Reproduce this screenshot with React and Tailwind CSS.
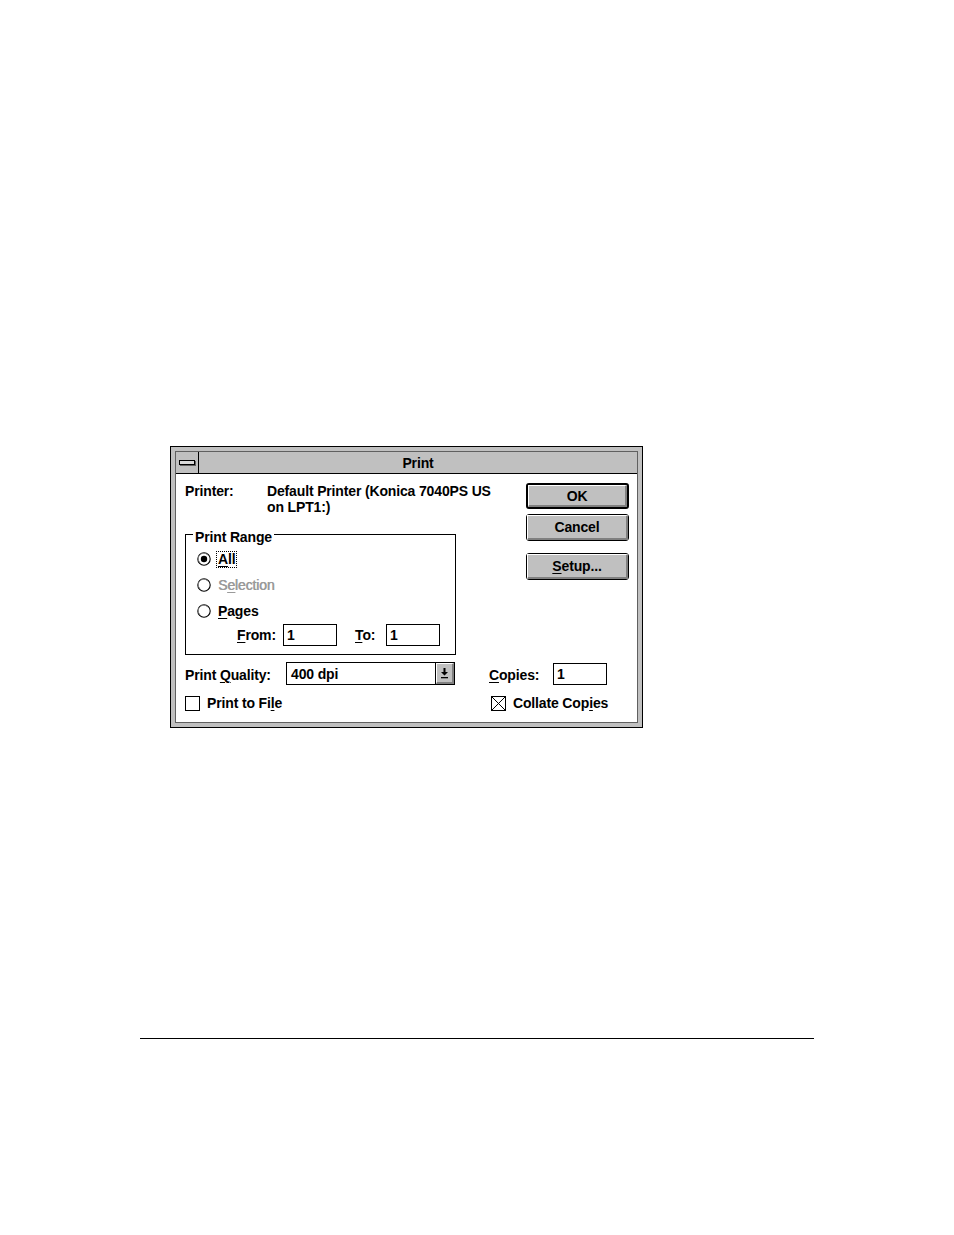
const font = "font-['Liberation_Sans',Arial,sans-serif]";

function U({ children }) {
  return <span className="underline decoration-1 underline-offset-[2px]">{children}</span>;
}

function Radio({ checked }) {
  return (
    <svg width="14" height="14" viewBox="0 0 14 14" className="shrink-0">
      <circle cx="7" cy="7" r="6.2" fill="white" stroke="#000" strokeWidth="1.1" />
      <path d="M2.8 10.6 A5.4 5.4 0 0 1 10.6 2.8" fill="none" stroke="#808080" strokeWidth="1" />
      {checked && <circle cx="7" cy="7" r="3.2" fill="#000" />}
    </svg>
  );
}

function Check({ checked }) {
  return (
    <svg width="15" height="15" viewBox="0 0 15 15" className="shrink-0">
      <rect x="0.5" y="0.5" width="14" height="14" fill="white" stroke="#000" />
      {checked && <path d="M1 1 L14 14 M14 1 L1 14" stroke="#000" strokeWidth="1" />}
    </svg>
  );
}

function Btn({ children, def }) {
  return (
    <div
      className={`w-[103px] ${def ? "h-[26px] border-2" : "h-[27px] border"} border-black rounded-[3px] bg-[#c0c0c0]`}
    >
      <div className="h-full flex items-center justify-center border-t-[1px] border-l-[1px] border-r-2 border-b-2 border-t-white border-l-white border-r-[#808080] border-b-[#808080]">
        {children}
      </div>
    </div>
  );
}

function Field({ w, value }) {
  return (
    <div className={`${w} h-[22px] border border-black bg-white pl-[3px] flex items-center`}>
      {value}
    </div>
  );
}

export default function App() {
  return (
    <div className={`w-[954px] h-[1235px] bg-white pt-[446px] text-black ${font} font-bold text-[14px] leading-[16px] tracking-[-0.15px]`}>
      {/* dialog */}
      <div className="ml-[170px] w-[473px] border border-black bg-[#c0c0c0] p-[4px]">
        <div className="border border-[#606060]">
          {/* title bar */}
          <div className="flex h-[22px] border-b border-black bg-[#c0c0c0]">
            <div className="w-[23px] border-r border-black flex items-center justify-center">
              <div className="w-[16px] h-[5px] border border-black bg-[#d8d8d8] shadow-[1px_1px_0_#606060]" />
            </div>
            <div className="flex-1 flex items-center justify-center">Print</div>
          </div>

          {/* body */}
          <div className="bg-white h-[248px] pl-[9px] pt-[9px]">
            <div className="flex">
              <div className="w-[341px]">
                <div className="flex whitespace-nowrap">
                  <div className="w-[82px]">Printer:</div>
                  <div>
                    Default Printer (Konica 7040PS US
                    <br />
                    on LPT1:)
                  </div>
                </div>

                {/* print range group */}
                <div className="relative mt-[19px] w-[271px] border border-black pt-[11px] pb-[8px]">
                  <span className="absolute -top-[6px] left-[7px] bg-white px-[2px]">Print Range</span>
                  <div className="h-[26px] flex items-center pl-[11px] gap-[5px]">
                    <Radio checked />
                    <span className="border border-dotted border-black px-[1px] leading-[15px]">
                      <U>A</U>ll
                    </span>
                  </div>
                  <div className="h-[26px] flex items-center pl-[11px] gap-[5px] text-[#9a9a9a]">
                    <Radio />
                    <span className="border border-transparent px-[1px] font-normal [text-shadow:0.5px_0_0_#9a9a9a]">
                      S<U>e</U>lection
                    </span>
                  </div>
                  <div className="h-[26px] flex items-center pl-[11px] gap-[5px]">
                    <Radio />
                    <span className="border border-transparent px-[1px]">
                      <U>P</U>ages
                    </span>
                  </div>
                  <div className="flex items-center pl-[51px]">
                    <div className="w-[46px]">
                      <U>F</U>rom:
                    </div>
                    <Field w="w-[54px]" value="1" />
                    <div className="w-[31px] ml-[18px]">
                      <U>T</U>o:
                    </div>
                    <Field w="w-[54px]" value="1" />
                  </div>
                </div>
              </div>

              <div className="flex flex-col">
                <Btn def>OK</Btn>
                <div className="mt-[5px]">
                  <Btn>Cancel</Btn>
                </div>
                <div className="mt-[12px]">
                  <Btn>
                    <span>
                      <U>S</U>etup...
                    </span>
                  </Btn>
                </div>
              </div>
            </div>

            {/* quality / copies */}
            <div className="flex items-center mt-[7px]">
              <div className="w-[101px] mt-[2px]">
                Print <U>Q</U>uality:
              </div>
              <div className="w-[169px] h-[23px] border border-black flex">
                <div className="flex-1 pl-[4px] flex items-center">400 dpi</div>
                <div className="w-[19px] border-l border-black bg-[#c0c0c0] flex items-center justify-center">
                  <div className="w-full h-full flex items-center justify-center border-t border-l border-r-2 border-b-2 border-t-white border-l-white border-r-[#808080] border-b-[#808080]">
                    <svg width="9" height="11" viewBox="0 0 9 11">
                      <path d="M3.5 0 H5.5 V4 H8 L4.5 7.5 L1 4 H3.5 Z" fill="#000" />
                      <rect x="1" y="9" width="7" height="1.3" fill="#000" />
                    </svg>
                  </div>
                </div>
              </div>
              <div className="w-[64px] ml-[34px] mt-[2px]">
                <U>C</U>opies:
              </div>
              <Field w="w-[54px]" value="1" />
            </div>

            <div className="flex items-center mt-[10px]">
              <div className="w-[306px] flex items-center gap-[7px]">
                <Check />
                <span>
                  Print to Fi<U>l</U>e
                </span>
              </div>
              <div className="flex items-center gap-[7px]">
                <Check checked />
                <span>
                  Collate Cop<U>i</U>es
                </span>
              </div>
            </div>
          </div>
        </div>
      </div>

      {/* footer rule */}
      <div className="ml-[140px] mt-[310px] w-[674px] h-[1px] bg-black" />
    </div>
  );
}
